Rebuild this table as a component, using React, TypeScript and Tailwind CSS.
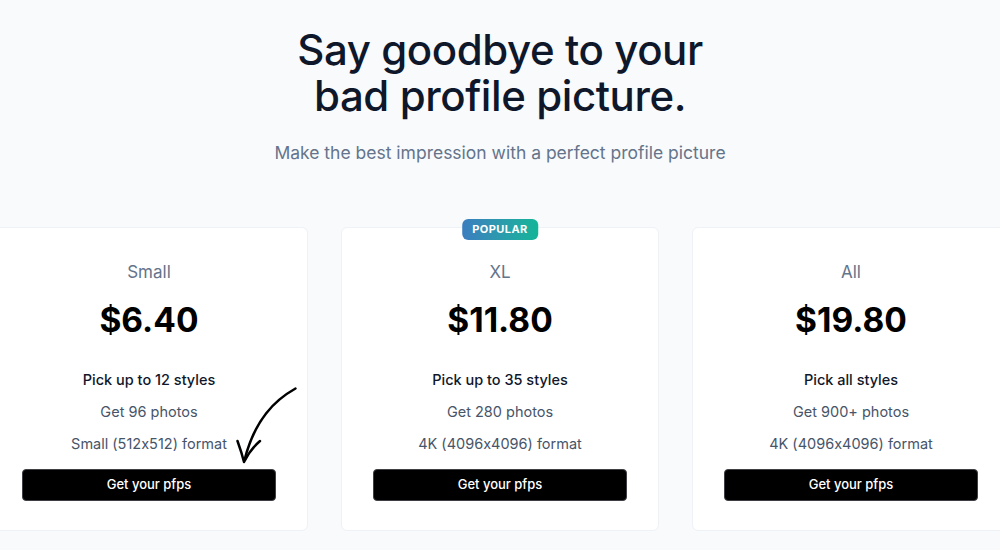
import React from 'react';

interface Plan {
  name: string;
  price: string;
  styles: string;
  photos: string;
  format: string;
  popular?: boolean;
}

const plans: Plan[] = [
  { name: 'Small', price: '$6.40', styles: 'Pick up to 12 styles', photos: 'Get 96 photos', format: 'Small (512x512) format' },
  { name: 'XL', price: '$11.80', styles: 'Pick up to 35 styles', photos: 'Get 280 photos', format: '4K (4096x4096) format', popular: true },
  { name: 'All', price: '$19.80', styles: 'Pick all styles', photos: 'Get 900+ photos', format: '4K (4096x4096) format' },
];

const HandArrow = () => (
  // hand-drawn arrow pointing at the first button
  <svg
    className="absolute left-[237.5px] top-[155px] w-[72px] h-[86px] pointer-events-none"
    viewBox="226 382 72 86"
    fill="none"
  >
    <path d="M292.5 387.5 C272 399 252 418 241.5 459" stroke="#000" strokeWidth="2.5" strokeLinecap="round" />
    <path d="M234.5 440 C237 447 239 453 241 461 C245 453 250 446 257 440" stroke="#000" strokeWidth="2.5" strokeLinecap="round" strokeLinejoin="round" />
  </svg>
);

const PlanCard = ({ plan, withArrow }: { plan: Plan; withArrow?: boolean }) => (
  <div className="relative w-[318px] shrink-0 bg-white border border-[#eef1f6] rounded-md pt-[32px] pb-[29px] px-[31px] flex flex-col items-center">
    {plan.popular && (
      <div className="absolute -top-[9px] left-1/2 -translate-x-1/2 h-[21px] px-[10px] rounded-md bg-gradient-to-r from-[#3b7dbf] to-[#10b597] flex items-center text-white text-[11px] font-bold tracking-[0.04em]">
        POPULAR
      </div>
    )}
    <div className="text-[17px] leading-6 text-[#64748b]">{plan.name}</div>
    <div className="mt-4 text-[33.5px] leading-10 font-bold text-black">{plan.price}</div>
    <div className="mt-[28px] flex flex-col items-center gap-2 text-[14.5px] leading-6">
      <div className="font-medium text-[#0f172a]">{plan.styles}</div>
      <div className="text-[#475569]">{plan.photos}</div>
      <div className="text-[#475569]">{plan.format}</div>
    </div>
    <button className="mt-[13px] w-full h-[32px] rounded bg-black border border-[#3f3f46] text-white text-[13px] font-medium">
      Get your pfps
    </button>
    {withArrow && <HandArrow />}
  </div>
);

export default function App() {
  return (
    <div className="w-full h-[550px] overflow-hidden bg-[#f8fafc] font-['Inter',sans-serif] [font-feature-settings:'calt'_0] flex flex-col items-center">
      <h1 className="mt-[27px] text-[42px] leading-[46px] font-medium text-[#0f172a] text-center tracking-[-0.01em]">
        Say goodbye to your
        <br />
        bad profile picture.
      </h1>
      <p className="mt-[20px] text-[17.5px] leading-7 text-[#64748b] text-center">
        Make the best impression with a perfect profile picture
      </p>
      <div className="mt-[60px] w-full flex justify-center gap-[33px]">
        {plans.map((p, i) => (
          <PlanCard key={p.name} plan={p} withArrow={i === 0} />
        ))}
      </div>
    </div>
  );
}
